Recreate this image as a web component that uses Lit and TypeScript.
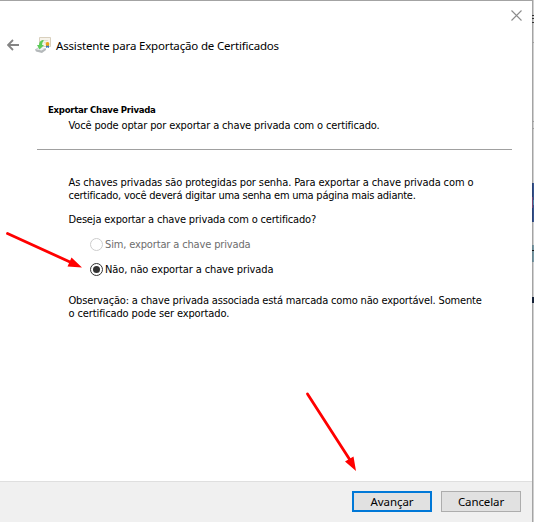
import { LitElement, html, css, svg } from "lit";
import { customElement } from "lit/decorators.js";

@customElement("app-root")
export class AppRoot extends LitElement {
  static styles = css`
    :host {
      display: block;
      position: relative;
      width: 534px;
      height: 522px;
      overflow: hidden;
      color: #000;
      font: 11px/13px "DejaVu Sans Condensed", "DejaVu Sans", sans-serif;
      font-stretch: condensed;
      letter-spacing: -0.145px;
    }
    .screen { display: grid; grid-template-columns: 532px 2px; height: 522px; }
    .dialog {
      box-sizing: border-box;
      height: 522px;
      border-top: 1px solid #a3a3a3;
      display: flex;
      flex-direction: column;
      background: #fff;
    }
    .edge svg { display: block; }
    .close { display: flex; justify-content: flex-end; padding: 9px 10px 0 0; height: 20px; }
    .title { display: flex; align-items: center; height: 32px; padding-left: 7px; }
    .title span {
      font: 11.5px/16px "Noto Sans", "Open Sans", sans-serif;
      letter-spacing: -0.17px;
      margin-left: 5px;
      white-space: nowrap;
    }
    .back { width: 12px; height: 12px; margin-right: 16px; position: relative; top: -1px; }
    .cert { width: 16px; height: 16px; position: relative; top: -1px; }
    .head { padding: 41px 20px 0 37px; }
    .head h1 {
      margin: 0 0 0 11px;
      font: bold 9.5px/13px "DejaVu Sans Condensed", sans-serif;
      font-stretch: condensed;
      letter-spacing: -0.28px;
      height: 16px;
      white-space: nowrap;
    }
    .head p { margin: 0 0 0 31.5px; height: 16px; white-space: nowrap; }
    .rule { height: 1px; background: #a0a0a0; margin-top: 14px; margin-bottom: 26px; }
    .body { flex: 1; padding-left: 68.5px; white-space: nowrap; }
    .line { display: block; width: max-content; }
    .tight { letter-spacing: -0.245px; }
    .snug { letter-spacing: -0.165px; }
    .loose { letter-spacing: -0.11px; }
    .question { margin: 11px 0 12px; }
    .option { display: flex; align-items: center; height: 13px; margin: 0 0 12px 21.5px; gap: 2px; }
    .option.off { color: #6d6d6d; }
    .option svg { width: 13px; height: 13px; }
    .note { padding-top: 6px; }
    .footer {
      box-sizing: border-box;
      height: 41px;
      border-top: 1px solid #dfdfdf;
      background: #f0f0f0;
      display: flex;
      justify-content: flex-end;
      gap: 9px;
      padding: 9px 11px 0 0;
    }
    button {
      box-sizing: border-box;
      width: 80px;
      height: 21px;
      border: 1px solid #adadad;
      background: #e1e1e1;
      padding: 0;
      color: #000;
      font: 11.5px/17px "Noto Sans", "Open Sans", sans-serif;
      letter-spacing: -0.1px;
    }
    button.primary { border: 2px solid #0078d7; }
    .arrows { position: absolute; left: 0; top: 0; pointer-events: none; }
  `;

  private radio(on: boolean) {
    return html`<svg viewBox="0 0 13 13">
      <circle cx="6.5" cy="6.5" r="6" fill="#fff" stroke=${on ? "#333" : "#ccc"}></circle>
      ${on ? svg`<circle cx="6.5" cy="6.5" r="3.5" fill="#333"></circle>` : ""}
    </svg>`;
  }

  render() {
    return html`
      <div class="screen">
        <div class="dialog">
          <div class="close">
            <svg width="11" height="11" viewBox="0 0 11 11"><path d="M.5 .5l10 10M10.5 .5l-10 10" stroke="#8c8c8c" stroke-width="1.1"/></svg>
          </div>
          <div class="title">
            <svg class="back" viewBox="0 0 12 12"><path d="M12 6H1M6 1L1 6l5 5" fill="none" stroke="#848484" stroke-width="1.8"/></svg>
            <svg class="cert" viewBox="0 0 16 16">
              <path d="M4.5 .5h11v9h-11z" fill="#f7f3ea" stroke="#d9d0be"/>
              <path d="M7 3.5h6M9 5.5h2" stroke="#e4dfd4"/>
              <path d="M0 12.5l4-2.5 7 1.5v1.5l-4 3-6-1.5z" fill="#b4b8ba"/>
              <path d="M1 12.3l4-1.8 5 1-3.5 2z" fill="#edf0f1"/>
              <path d="M7.5 3Q4 4 4 8H2l2.5 4.500L9 8H7Q7 5 9 3.500z" fill="#5ccc58"/>
              <path d="M11 8v3l1.2-.8 1.8.8V8z" fill="#3775bd"/>
              <circle cx="12.5" cy="7" r="1.9" fill="#e8a21b"/>
            </svg>
            <span>Assistente para Exportação de Certificados</span>
          </div>
          <div class="head">
            <h1>Exportar Chave Privada</h1>
            <p>Você pode optar por exportar a chave privada com o certificado.</p>
            <div class="rule"></div>
          </div>
          <div class="body">
            <span class="line loose">As chaves privadas são protegidas por senha. Para exportar a chave privada com o</span>
            <span class="line tight">certificado, você deverá digitar uma senha em uma página mais adiante.</span>
            <span class="line question snug">Deseja exportar a chave privada com o certificado?</span>
            <div class="option off">${this.radio(false)}<span>Sim, exportar a chave privada</span></div>
            <div class="option">${this.radio(true)}<span class="loose">Não, não exportar a chave privada</span></div>
            <div class="note">
              <span class="line snug">Observação: a chave privada associada está marcada como não exportável. Somente</span>
              <span class="line loose">o certificado pode ser exportado.</span>
            </div>
          </div>
          <div class="footer">
            <button class="primary">Avançar</button>
            <button>Cancelar</button>
          </div>
        </div>
        <div class="edge">
          <svg width="2" height="522" viewBox="0 0 2 522" shape-rendering="crispEdges">
            <path d="M.5 0v522" stroke="#a4a4a4"/>
            <path d="M1.5 0v522" stroke="#d0d0d0"/>
            <path d="M0 15.5h2M0 18.5h2M0 22.5h2" stroke="#333"/>
            <path d="M0 42.5h2M0 121.5h2M0 128.5h2" stroke="#a0a0a0"/>
            <path d="M.5 183v39" stroke="#2b4274"/>
            <path d="M1.5 183v39" stroke="#36548f"/>
            <path d="M.5 197v11" stroke="#75456f"/>
            <path d="M1.5 200v5" stroke="#4a86b0"/>
            <path d="M.5 245v17" stroke="#69858f"/>
            <path d="M1.5 245v17" stroke="#7899a5"/>
            <path d="M0 250.5h2" stroke="#111"/>
            <path d="M1 297v6" stroke="#142036" stroke-width="2"/>
          </svg>
        </div>
      </div>
      <svg class="arrows" width="534" height="522" viewBox="0 0 534 522">
        <g stroke="#f00" stroke-width="2.8" stroke-linecap="round">
          <path d="M7.5 233.5L70 262"/>
          <path d="M307.5 394L350 460"/>
        </g>
        <path d="M82 267.5L67.5 266.5L71.5 257.5zM356 471L345 461.5L353.5 456.5z" fill="#f00"/>
      </svg>
    `;
  }
}
